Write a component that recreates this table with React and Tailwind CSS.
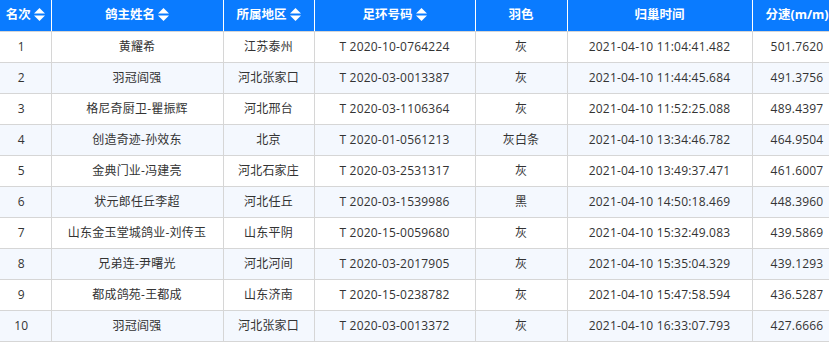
import React from "react";

const rows = [
  ["1", "黄耀希", "江苏泰州", "T 2020-10-0764224", "灰", "2021-04-10 11:04:41.482", "501.7620"],
  ["2", "羽冠阎强", "河北张家口", "T 2020-03-0013387", "灰", "2021-04-10 11:44:45.684", "491.3756"],
  ["3", "格尼奇厨卫-瞿振辉", "河北邢台", "T 2020-03-1106364", "灰", "2021-04-10 11:52:25.088", "489.4397"],
  ["4", "创造奇迹-孙效东", "北京", "T 2020-01-0561213", "灰白条", "2021-04-10 13:34:46.782", "464.9504"],
  ["5", "金典门业-冯建亮", "河北石家庄", "T 2020-03-2531317", "灰", "2021-04-10 13:49:37.471", "461.6007"],
  ["6", "状元郎任丘李超", "河北任丘", "T 2020-03-1539986", "黑", "2021-04-10 14:50:18.469", "448.3960"],
  ["7", "山东金玉堂城鸽业-刘传玉", "山东平阴", "T 2020-15-0059680", "灰", "2021-04-10 15:32:49.083", "439.5869"],
  ["8", "兄弟连-尹曙光", "河北河间", "T 2020-03-2017905", "灰", "2021-04-10 15:35:04.329", "439.1293"],
  ["9", "都成鸽苑-王都成", "山东济南", "T 2020-15-0238782", "灰", "2021-04-10 15:47:58.594", "436.5287"],
  ["10", "羽冠阎强", "河北张家口", "T 2020-03-0013372", "灰", "2021-04-10 16:33:07.793", "427.6666"],
];

const SortIcon = () => (
  <svg width="11" height="13" viewBox="0 0 11 13" className="inline-block ml-[3px] align-[-2px]">
    <path d="M5.5 0 L11 5.5 H0 Z" fill="#fff" />
    <path d="M0 7.5 H11 L5.5 13 Z" fill="#fff" />
  </svg>
);

const headers = [
  ["名次", true],
  ["鸽主姓名", true],
  ["所属地区", true],
  ["足环号码", true],
  ["羽色", false],
  ["归巢时间", false],
  ["分速(m/m)", false],
];

const widths = ["w-[51px]", "w-[172px]", "w-[91px]", "w-[161px]", "w-[92px]", "w-[185px]", "w-[90px]"];

export default function App() {
  return (
    <div
      className="w-[829px] h-[342px] overflow-hidden bg-white"
      style={{ fontFamily: '"Open Sans", "Noto Sans CJK SC", sans-serif' }}
    >
      <table className="table-fixed border-collapse w-[842px] text-[12px] text-[#333] tracking-[0.2px]">
        <colgroup>
          {widths.map((w, i) => (
            <col key={i} className={w} />
          ))}
        </colgroup>
        <thead>
          <tr className="h-[31px] bg-[#0a7bff]">
            {headers.map(([h, s], i) => (
              <th
                key={i}
                className="border-r border-white border-b border-b-[#d6d6d6] text-white font-bold text-[12.5px] tracking-normal text-center whitespace-nowrap p-0"
              >
                {h}
                {s && <SortIcon />}
              </th>
            ))}
          </tr>
        </thead>
        <tbody>
          {rows.map((r, ri) => (
            <tr key={ri} className={`h-[31px] ${ri % 2 === 1 ? "bg-[#f4f8fe]" : "bg-white"}`}>
              {r.map((c, ci) => (
                <td
                  key={ci}
                  className={`border-r border-b border-[#d6d6d6] text-center whitespace-nowrap p-0 ${ci === 0 ? "pr-2" : ""}`}
                >
                  {c}
                </td>
              ))}
            </tr>
          ))}
        </tbody>
      </table>
    </div>
  );
}
